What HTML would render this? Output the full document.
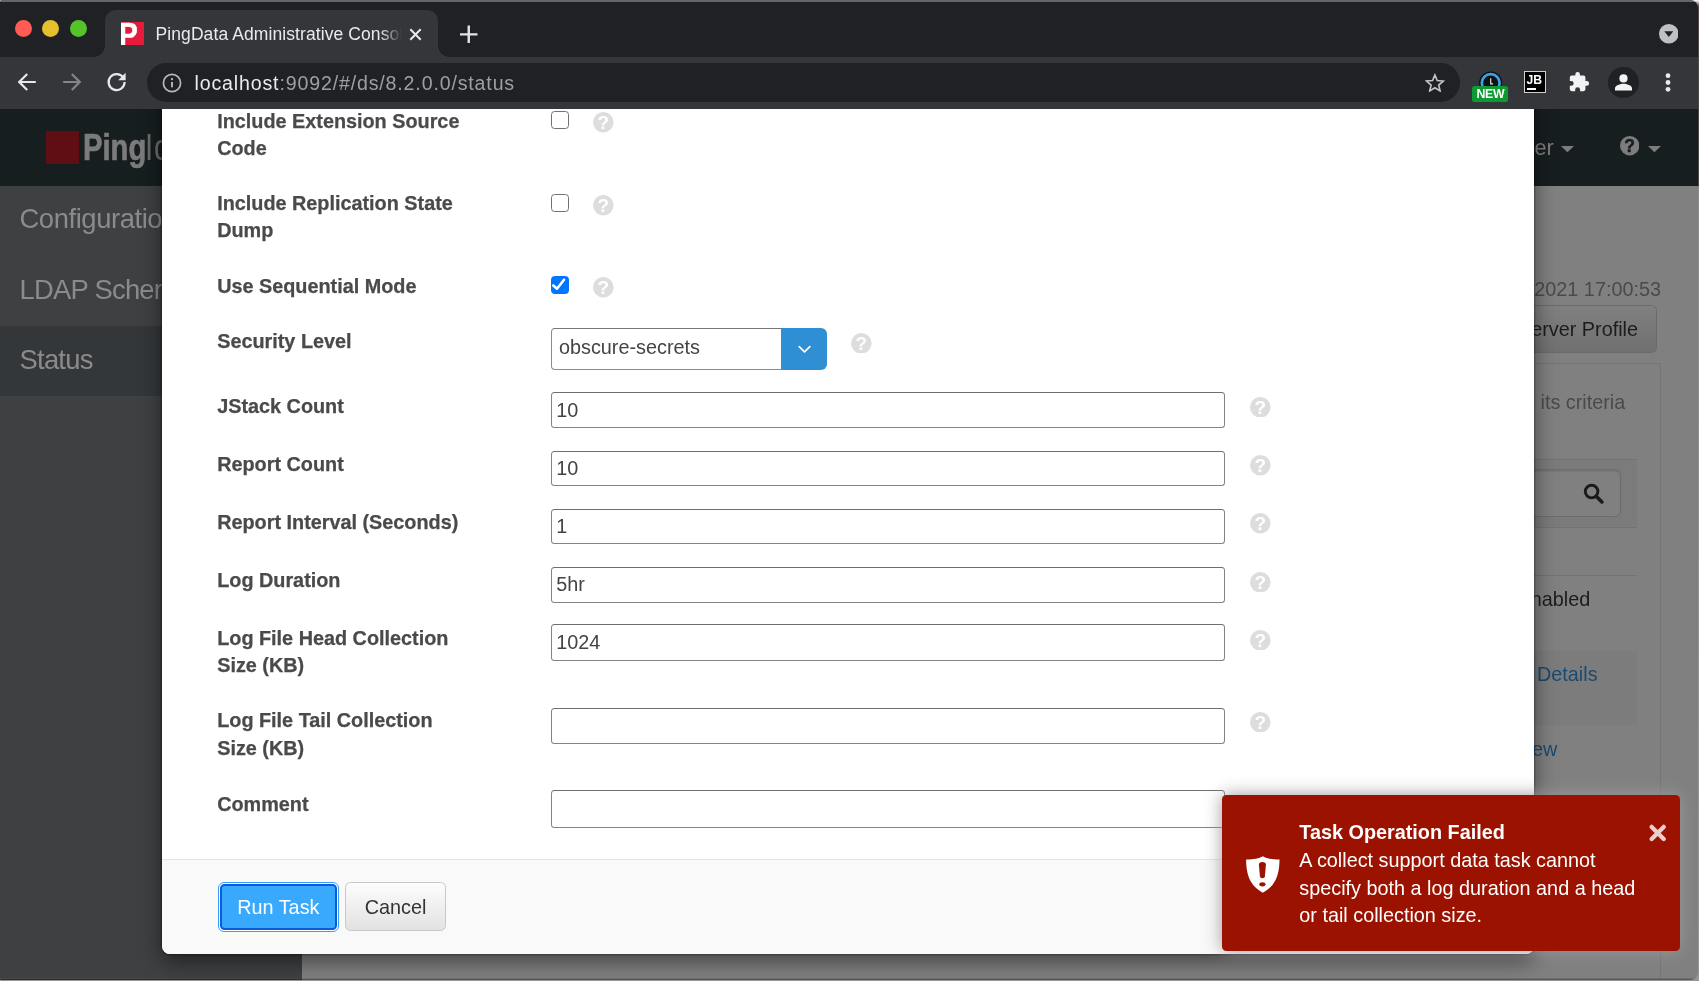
<!DOCTYPE html>
<html lang="en">
<head>
<meta charset="utf-8">
<title>PingData Administrative Console</title>
<style>
*{box-sizing:border-box;margin:0;padding:0}
html,body{width:1699px;height:981px;overflow:hidden;background:#8f8f8f}
body{background:linear-gradient(#fff 0,#5a4c48 6px,#4c4a4a 108px,#4c4c4c 186px,#8d8d8d 187px,#959595 100%)}
body{font-family:"Liberation Sans",Arial,sans-serif;position:relative}
.abs{position:absolute}
#win{position:absolute;left:0;top:0;width:1697.6px;height:979.8px;background:#808080;overflow:hidden;border-radius:2px 8px 8px 1.5px;will-change:transform}
#winedge{position:absolute;left:0;bottom:0;width:100%;height:2.2px;border-top:1.1px solid rgba(255,255,255,.13);background:rgba(0,0,0,.3)}
/* ---------- browser chrome ---------- */
#tabstrip{position:absolute;left:0;top:0;width:1699px;height:57.3px;background:#202124}
#topline{position:absolute;left:0;top:0;width:1699px;height:1.6px;background:#646568}
#toolbar{position:absolute;left:0;top:57.3px;width:1699px;height:51.3px;background:#35363a}
.tl{position:absolute;top:20.3px;width:17px;height:17px;border-radius:50%}
#tab{position:absolute;left:105px;top:9.9px;width:333px;height:47.6px;background:#35363a;border-radius:11px 11px 0 0}
#tab:before,#tab:after{content:"";position:absolute;bottom:0;width:11px;height:11px}
#tab:before{left:-11px;background:radial-gradient(circle at 0 0,rgba(0,0,0,0) 10.5px,#35363a 11px)}
#tab:after{right:-11px;background:radial-gradient(circle at 100% 0,rgba(0,0,0,0) 10.5px,#35363a 11px)}
#tabtitle{position:absolute;left:155.5px;top:22px;width:248px;height:24px;line-height:24px;font-size:17.5px;letter-spacing:.09px;color:#e8eaed;white-space:nowrap;overflow:hidden;
 -webkit-mask-image:linear-gradient(90deg,#000 0,#000 224px,rgba(0,0,0,0) 246px);mask-image:linear-gradient(90deg,#000 0,#000 224px,rgba(0,0,0,0) 246px)}
#omni{position:absolute;left:147px;top:63.1px;width:1313px;height:38.8px;border-radius:19.4px;background:#202124}
#url{position:absolute;left:194.5px;top:69px;height:28px;line-height:28px;font-size:19.6px;letter-spacing:.84px;color:#9aa0a6;white-space:nowrap}
#url b{font-weight:normal;color:#e8eaed}
/* ---------- page (dimmed) ---------- */
#navbar{position:absolute;left:0;top:108px;width:1699px;height:78.3px;background:#161e20}
#sidebar{position:absolute;left:0;top:186px;width:302px;height:800px;background:#3e4042}
.sitem{position:absolute;left:0;width:302px;height:70px;font-size:27.4px;line-height:70px;color:#8b8b8b;padding-left:19.5px;letter-spacing:-.75px;white-space:nowrap;overflow:hidden}
.dimtxt{position:absolute;font-size:19.82px;line-height:28px;white-space:nowrap}
/* ---------- modal ---------- */
#modal{position:absolute;left:162px;top:60px;width:1372px;height:893.5px;background:#fff;border-radius:8px;box-shadow:0 0 0 1.4px rgba(0,0,0,.2),0 7px 21px rgba(0,0,0,.5)}
#mfoot{position:absolute;left:0;bottom:0;width:1372px;height:95px;background:#f9f9f9;border-top:1.4px solid #e5e5e5;border-radius:0 0 8px 8px}
.lbl{position:absolute;left:217.2px;font-size:19.82px;line-height:27.4px;font-weight:bold;color:#4a4a4a;white-space:nowrap;-webkit-text-stroke:.25px #4a4a4a}
.inp{position:absolute;left:551px;width:674px;height:35.5px;border:1.6px solid #838383;border-top-color:#6e6e6e;border-radius:3.5px;background:#fff;font-size:19.82px;display:flex;align-items:center;color:#444;padding-left:4.2px}
.cb{position:absolute;left:550.75px;width:18.25px;height:18.25px;border:1.6px solid #707070;border-radius:3.5px;background:#fff}
.help{position:absolute;width:20.6px;height:20.6px}
.btn{position:absolute;font-size:19.82px;text-align:center;white-space:nowrap}
/* ---------- toast ---------- */
#toast{position:absolute;left:1222.2px;top:794.5px;width:457.9px;height:156.4px;background:#9c1200;border-radius:4.5px;box-shadow:0 0 17px #999;color:#fff}
</style>
</head>
<body>
<div id="win">

<!-- ================= page behind modal (dimmed) ================= -->
<div id="navbar"></div>
<div class="abs" style="left:46.4px;top:130.6px;width:32.4px;height:33.4px;background:#5f0f13"></div>
<div class="abs" id="pinglogo" style="left:83.3px;top:124.1px;height:48px;line-height:48px;font-size:36.5px;font-weight:bold;color:#7b7b7b;white-space:nowrap;transform-origin:0 50%;transform:scaleX(.8)"><span style="-webkit-text-stroke:.7px #7b7b7b">Ping</span><span style="font-weight:normal;color:#6c6c6c;letter-spacing:1px;margin-left:-1.5px">Identity</span></div>
<div class="dimtxt" style="right:143.8px;top:133.5px;font-size:21.6px;color:#7d7d7d">Directory Manager</div>
<svg class="abs" style="left:1560.5px;top:145.8px" width="13" height="6.3" viewBox="0 0 13 6.3"><path d="M0 0h13L6.5 6.3z" fill="#7d7d7d"/></svg>
<svg class="abs" style="left:1620px;top:136.2px" width="19.4" height="19.4" viewBox="0 0 19.4 19.4"><circle cx="9.7" cy="9.7" r="9.7" fill="#7d7d7d"/><text x="9.7" y="16" font-family="Liberation Sans,sans-serif" font-weight="bold" font-size="17.5" text-anchor="middle" fill="#161e20" stroke="#161e20" stroke-width=".5">?</text></svg>
<svg class="abs" style="left:1648.4px;top:145.8px" width="13" height="6.3" viewBox="0 0 13 6.3"><path d="M0 0h13L6.5 6.3z" fill="#7d7d7d"/></svg>

<div id="sidebar"></div>
<div class="sitem" style="top:186px;line-height:66px;letter-spacing:-.42px">Configuration</div>
<div class="sitem" style="top:256px;line-height:68px">LDAP Schema</div>
<div class="sitem" style="top:326px;background:#33373a;line-height:68px">Status</div>

<!-- right hand content -->
<div class="dimtxt" style="right:36.6px;top:274.6px;color:#4a4a4a">Tue Jun 15 2021 17:00:53</div>
<div class="abs" style="left:1400px;top:305px;width:257px;height:47.5px;border:1.4px solid #6a6a6a;border-radius:5.5px;background:linear-gradient(#808080,#707070)"></div>
<div class="dimtxt" style="right:59.6px;top:315px;color:#1c1c1c">Generate Server Profile</div>
<div class="abs" style="left:1400px;top:363px;width:260.6px;height:700px;border:1.4px solid #757575;border-left:none"></div>
<div class="dimtxt" style="right:72.3px;top:388px;color:#4a4a4a">A gauge is in alarm when it meets its criteria</div>
<div class="abs" style="left:1400px;top:459px;width:236.5px;height:69px;background:#7b7b7b;border-top:1.4px solid #727272;border-bottom:1.4px solid #727272"></div>
<div class="abs" style="left:1400px;top:469px;width:221px;height:47.5px;border:1.4px solid #6c6c6c;border-radius:5.5px;background:#808080;box-shadow:inset 0 1.4px 1.4px rgba(0,0,0,.12)"></div>
<svg class="abs" style="left:1583px;top:482.8px" width="22" height="22" viewBox="0 0 22 22"><circle cx="8.6" cy="8.6" r="6.3" fill="none" stroke="#1a1a1a" stroke-width="2.9"/><path d="M13.2 13.2L18.900 18.900" stroke="#1a1a1a" stroke-width="3.6" stroke-linecap="round"/></svg>
<div class="abs" style="left:1400px;top:574.5px;width:236.5px;height:1.4px;background:#727272"></div>
<div class="dimtxt" style="right:107.3px;top:584.8px;color:#1c1c1c">Enabled</div>
<div class="abs" style="left:1400px;top:650.75px;width:236.5px;height:74.5px;background:#7c7c7c"></div>
<div class="dimtxt" style="left:1537px;top:659.6px;color:#1a4a70">Details</div>
<div class="dimtxt" style="right:140.3px;top:735.2px;color:#1a4a70">View</div>

<!-- ================= modal ================= -->
<div id="modal"><div id="mfoot"></div></div>

<div class="lbl" style="top:108.0px">Include Extension Source<br>Code</div>
<div class="lbl" style="top:189.8px">Include Replication State<br>Dump</div>
<div class="lbl" style="top:272.8px">Use Sequential Mode</div>
<div class="lbl" style="top:328.4px">Security Level</div>
<div class="lbl" style="top:392.7px">JStack Count</div>
<div class="lbl" style="top:451.0px">Report Count</div>
<div class="lbl" style="top:509.2px">Report Interval (Seconds)</div>
<div class="lbl" style="top:567.2px">Log Duration</div>
<div class="lbl" style="top:624.7px">Log File Head Collection<br>Size (KB)</div>
<div class="lbl" style="top:707.2px">Log File Tail Collection<br>Size (KB)</div>
<div class="lbl" style="top:790.7px">Comment</div>

<div class="cb" style="top:110.75px"></div>
<div class="cb" style="top:194px"></div>
<div class="cb" style="top:275.5px;background:#0075ff;border-color:#0075ff"><svg style="position:absolute;left:-1.5px;top:-1.5px" width="18.25" height="18.25" viewBox="0 0 18.25 18.25"><path d="M3.3 10.5L7 13.7L14 4.7" fill="none" stroke="#fff" stroke-width="2.6" stroke-linecap="round" stroke-linejoin="round"/></svg></div>

<!-- select -->
<div class="abs" style="left:550.75px;top:328.25px;width:232px;height:41.25px;border:1.5px solid #8c8c8c;border-top-color:#777;border-right:none;border-radius:4px 0 0 4px;background:#fff"></div>
<div class="abs" style="left:781px;top:328.25px;width:46.3px;height:41.25px;border-radius:0 6px 6px 0;background:#2e8fd4"></div>
<svg class="abs" style="left:798px;top:344.5px" width="13" height="9" viewBox="0 0 13 9"><path d="M1.2 1.6L6.5 6.9L11.8 1.6" fill="none" stroke="#fff" stroke-width="1.7" stroke-linecap="round" stroke-linejoin="round"/></svg>
<div class="abs" style="left:559px;top:332.7px;font-size:19.82px;line-height:28px;color:#444;white-space:nowrap">obscure-secrets</div>

<div class="inp" style="top:392.4px;height:35.7px">10</div>
<div class="inp" style="top:450.6px;height:35.7px">10</div>
<div class="inp" style="top:508.7px;height:35.7px">1</div>
<div class="inp" style="top:567.2px;height:35.5px">5hr</div>
<div class="inp" style="top:624.4px;height:37.1px">1024</div>
<div class="inp" style="top:707.9px;height:36px"></div>
<div class="inp" style="top:790.2px;height:37.6px"></div>

<!-- help icons -->
<svg width="0" height="0" style="position:absolute"><defs>
<g id="hq"><circle cx="10.3" cy="10.3" r="10.3" fill="#dddddd"/><text x="10.3" y="17.1" font-family="Liberation Sans,sans-serif" font-weight="bold" font-size="19" text-anchor="middle" fill="#ffffff">?</text></g>
</defs></svg>
<svg class="help" style="left:593.2px;top:112.2px"><use href="#hq"/></svg>
<svg class="help" style="left:593.2px;top:195.2px"><use href="#hq"/></svg>
<svg class="help" style="left:593.2px;top:277.2px"><use href="#hq"/></svg>
<svg class="help" style="left:851px;top:332.7px"><use href="#hq"/></svg>
<svg class="help" style="left:1250.2px;top:396.7px"><use href="#hq"/></svg>
<svg class="help" style="left:1250.2px;top:455.2px"><use href="#hq"/></svg>
<svg class="help" style="left:1250.2px;top:513.2px"><use href="#hq"/></svg>
<svg class="help" style="left:1250.2px;top:571.5px"><use href="#hq"/></svg>
<svg class="help" style="left:1250.2px;top:629.5px"><use href="#hq"/></svg>
<svg class="help" style="left:1250.2px;top:711.5px"><use href="#hq"/></svg>

<!-- buttons -->
<div class="abs" style="left:217.8px;top:882px;width:121px;height:49.9px;border:1.2px solid #3d9dff;border-radius:6px;background:#fff;padding:1.3px"><div style="width:100%;height:100%;border:2.6px solid #0a5dd9;border-radius:4.5px;background:#38a9fc"></div></div>
<div class="btn" style="left:218px;top:893px;width:120.7px;line-height:28px;color:#fff">Run Task</div>
<div class="abs" style="left:345.2px;top:882px;width:100.8px;height:49.4px;border:1.4px solid #c8c8c8;border-radius:5.5px;background:linear-gradient(#fdfdfd,#e2e2e2)"></div>
<div class="btn" style="left:345.2px;top:893px;width:100.8px;line-height:28px;color:#333">Cancel</div>

<!-- ================= toast ================= -->
<div id="toast"></div>
<svg class="abs" style="left:1246px;top:855.5px" width="34" height="37" viewBox="0 0 34 37"><path d="M16.8 0.2C13 2.6 8 3.4 0.1 3.5C0.2 13 1.700 20 4.700 25.300C7.700 30.500 12 34.200 16.800 36.700C21.600 34.200 25.900 30.500 28.900 25.300C31.900 20 33.400 13 33.500 3.500C25.600 3.400 20.600 2.600 16.800 0.200Z" fill="#fff"/><path d="M12.9 8.600Q12.900 6.100 16.400 6.100Q19.900 6.100 19.900 8.600L18.900 20.200Q18.700 22.300 16.400 22.300Q14.100 22.300 13.900 20.200Z" fill="#9c1200"/><ellipse cx="16.4" cy="28.3" rx="3.1" ry="2.15" fill="#9c1200"/></svg>
<div class="abs" style="left:1299.3px;top:817.9px;font-size:19.82px;line-height:28px;font-weight:bold;color:#fff;white-space:nowrap">Task Operation Failed</div>
<div class="abs" style="left:1299.3px;top:847px;font-size:19.82px;line-height:27.7px;color:#fff;white-space:nowrap">A collect support data task cannot<br>specify both a log duration and a head<br>or tail collection size.</div>
<svg class="abs" style="left:1649px;top:824px" width="18" height="18" viewBox="0 0 18 18"><path d="M2.7 2.900L14.700 14.900M14.700 2.900L2.700 14.900" stroke="#eccfcb" stroke-width="4.3" stroke-linecap="round" stroke-linejoin="round"/></svg>

<!-- ================= browser chrome ================= -->
<div id="tabstrip"></div>
<div id="topline"></div>
<div id="toolbar"></div>
<div class="tl" style="left:14.5px;background:#fe5c54"></div>
<div class="tl" style="left:42px;background:#e6bf2c"></div>
<div class="tl" style="left:70px;background:#55c42b"></div>
<div id="tab"></div>
<!-- favicon -->
<div class="abs" style="left:121.2px;top:22px;width:22.8px;height:22.8px;background:#e51b3b;overflow:hidden"><div style="position:absolute;left:-2px;top:-3.5px;font-size:31px;line-height:31px;font-weight:bold;color:#fff;-webkit-text-stroke:.7px #fff;transform-origin:0 0;transform:scaleX(.9)">P</div></div>
<div id="tabtitle">PingData Administrative Console</div>
<svg class="abs" style="left:409px;top:27.5px" width="13" height="13" viewBox="0 0 13 13"><path d="M1.3 1.3L11.7 11.7M11.7 1.3L1.3 11.7" stroke="#e8eaed" stroke-width="2"/></svg>
<svg class="abs" style="left:460px;top:25px" width="17.5" height="19" viewBox="0 0 17.5 19"><path d="M8.75 0.6v17.5M0 9.35h17.5" stroke="#e2e4e7" stroke-width="2.4"/></svg>
<svg class="abs" style="left:1658.7px;top:24px" width="19.6" height="19.6" viewBox="0 0 19.6 19.6"><circle cx="9.8" cy="9.8" r="9.8" fill="#bdc1c6"/><path d="M5.3 7.2h9L9.8 13z" fill="#202124"/></svg>

<!-- toolbar icons -->
<svg class="abs" style="left:16.8px;top:71.8px" width="20" height="20" viewBox="0 0 20 20"><path d="M18.8 10H2.6M10.2 1.9L2.2 10L10.2 18.1" fill="none" stroke="#e6e8eb" stroke-width="2.2"/></svg>
<svg class="abs" style="left:61.8px;top:71.8px" width="20" height="20" viewBox="0 0 20 20"><path d="M1.2 10H17.4M9.8 1.9L17.8 10L9.8 18.1" fill="none" stroke="#84868a" stroke-width="2.2"/></svg>
<svg class="abs" style="left:105.7px;top:71.4px" width="22" height="22" viewBox="0 0 22 22"><path d="M17.6 7.2A8 8 0 1 0 18.6 11" fill="none" stroke="#e6e8eb" stroke-width="2.2"/><path d="M19.6 1.8V9.2H12.2z" fill="#e6e8eb"/></svg>
<div id="omni"></div>
<svg class="abs" style="left:162px;top:73px" width="20" height="20" viewBox="0 0 20 20"><circle cx="10" cy="10" r="8.6" fill="none" stroke="#b4b8bd" stroke-width="1.7"/><path d="M10 9v5.2" stroke="#b4b8bd" stroke-width="1.9"/><circle cx="10" cy="6.2" r="1.15" fill="#b4b8bd"/></svg>
<div id="url"><b>localhost</b>:9092/#/ds/8.2.0.0/status</div>
<svg class="abs" style="left:1424.9px;top:72.5px" width="19.8" height="19.8" viewBox="0 0 22 22"><path d="M11 2.2l2.6 6.2l6.7.55l-5.1 4.4l1.55 6.55L11 16.4l-5.75 3.5l1.55-6.55l-5.1-4.4l6.7-.55z" fill="none" stroke="#c2c5ca" stroke-width="1.8" stroke-linejoin="miter"/></svg>
<!-- ext 1 -->
<svg class="abs" style="left:1478px;top:70px" width="26" height="26" viewBox="0 0 26 26"><circle cx="12.7" cy="13" r="11.6" fill="#111"/><circle cx="12.7" cy="13" r="8.9" fill="none" stroke="#3ba0e6" stroke-width="2.7"/><path d="M12.7 8.2v5.6h2.4" fill="none" stroke="#ddd" stroke-width="1.2"/></svg>
<div class="abs" style="left:1472.2px;top:85.5px;width:36.3px;height:16.5px;background:#0d9a33;border-radius:2.5px;color:#fff;font-size:12.3px;font-weight:bold;line-height:17.6px;text-align:center;letter-spacing:-.3px">NEW</div>
<!-- JB -->
<div class="abs" style="left:1524.1px;top:71.1px;width:22.3px;height:22.4px;background:#000;border:1.1px solid #d0d0d0"></div>
<div class="abs" style="left:1526.6px;top:72.6px;font-size:12.2px;line-height:14px;font-weight:bold;color:#fff;letter-spacing:-.2px">JB</div>
<div class="abs" style="left:1527.2px;top:88.4px;width:8.6px;height:1.7px;background:#fff"></div>
<!-- puzzle -->
<svg class="abs" style="left:1568.4px;top:70.8px" width="22" height="22" viewBox="0 0 24 24"><path d="M20.5 11H19V7a2 2 0 0 0-2-2h-4V3.5a2.5 2.5 0 0 0-5 0V5H4a2 2 0 0 0-2 2v3.8h1.5a2.7 2.7 0 0 1 0 5.4H2V20a2 2 0 0 0 2 2h3.8v-1.5a2.7 2.7 0 0 1 5.4 0V22H17a2 2 0 0 0 2-2v-4h1.5a2.5 2.5 0 0 0 0-5z" fill="#f1f3f4"/></svg>
<!-- profile -->
<div class="abs" style="left:1608.3px;top:67.1px;width:30.6px;height:30.6px;border-radius:50%;background:#202124"></div>
<svg class="abs" style="left:1614.1px;top:72.6px" width="19" height="19" viewBox="0 0 19 19"><circle cx="9.5" cy="5.4" r="4.1" fill="#f1f3f4"/><path d="M1 17.6v-2.4c0-3 5.6-4.5 8.500-4.500s8.500 1.500 8.500 4.500v2.400z" fill="#f1f3f4"/></svg>
<!-- dots -->
<svg class="abs" style="left:1665px;top:72.1px" width="6" height="21" viewBox="0 0 6 21"><circle cx="3" cy="3.7" r="2.4" fill="#e8eaed"/><circle cx="3" cy="10.5" r="2.4" fill="#e8eaed"/><circle cx="3" cy="17.3" r="2.4" fill="#e8eaed"/></svg>

<div id="winedge"></div>
</div>
</body>
</html>
